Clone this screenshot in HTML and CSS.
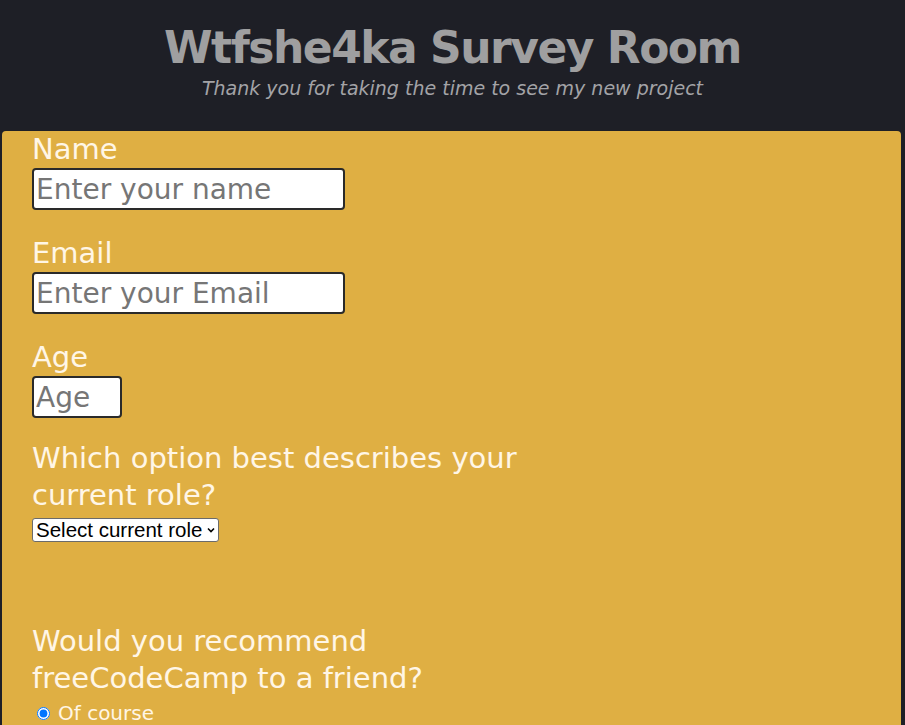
FILE: index.html
```html
<!DOCTYPE html>
<html lang="en">
<head>
<meta charset="utf-8">
<title>Wtfshe4ka Survey Room</title>
<link rel="stylesheet" href="styles.css">
</head>
<body>
<header class="header">
  <h1 class="title">Wtfshe4ka Survey Room</h1>
  <p class="subtitle">Thank you for taking the time to see my new project</p>
</header>
<form class="card">
  <div class="group">
    <label class="label" for="name">Name</label>
    <input class="field field-wide" id="name" type="text" placeholder="Enter your name">
  </div>
  <div class="group">
    <label class="label" for="email">Email</label>
    <input class="field field-wide" id="email" type="email" placeholder="Enter your Email">
  </div>
  <div class="group">
    <label class="label" for="age">Age</label>
    <input class="field field-age" id="age" type="number" placeholder="Age">
  </div>
  <div class="group group-select">
    <label class="label label-wrap" for="role">Which option best describes your current role?</label>
    <span class="select-box">
      <select class="select" id="role">
        <option>Select current role</option>
      </select>
      <svg class="chevron" width="8" height="6" viewBox="0 0 8 6" aria-hidden="true"><path d="M1 1.5 L4 4.5 L7 1.5" fill="none" stroke="#000" stroke-width="1.6"/></svg>
    </span>
  </div>
  <div class="group">
    <p class="label label-wrap">Would you recommend freeCodeCamp to a friend?</p>
    <label class="radio-row"><input class="radio" type="radio" name="rec" checked> Of course</label>
  </div>
</form>
</body>
</html>
```
FILE: styles.css
```css
html, body {
  margin: 0;
  padding: 0;
}
body {
  background: #1e1f26;
  font-family: "DejaVu Sans", "Liberation Sans", sans-serif;
  color: #fff6e6;
}
.header {
  text-align: center;
  padding-top: 19px;
  height: 114px;
  box-sizing: border-box;
}
.title {
  margin: 0;
  font-size: 44px;
  line-height: 58px;
  font-weight: bold;
  color: #9f9fa0;
  letter-spacing: -1.5px;
}
.subtitle {
  margin: -1px 0 0;
  font-size: 19px;
  line-height: 24px;
  font-style: italic;
  color: #a3a3a6;
}
.card {
  margin: 17px 4px 0 2px;
  background: #dfaf43;
  border-radius: 4px;
  padding: 0 30px 40px;
  display: flex;
  flex-direction: column;
  gap: 25px;
  min-height: 600px;
}
.group {
  display: flex;
  flex-direction: column;
  align-items: flex-start;
}
.label {
  font-size: 29px;
  line-height: 37px;
  margin: 0;
  color: #fff6e6;
}
.label-wrap {
  max-width: 520px;
}
.field {
  box-sizing: border-box;
  height: 42px;
  border: 2px solid #2a2a2a;
  border-radius: 4px;
  background: #fff;
  font-family: inherit;
  font-size: 28px;
  padding: 0 2px;
  color: #333;
}
.field::placeholder {
  color: #767676;
}
.field-wide {
  width: 313px;
}
.field-age {
  width: 90px;
}
.group-select {
  margin-top: -3px;
  margin-bottom: 56px;
}
.select-box {
  margin-top: 4px;
  display: inline-flex;
  align-items: center;
  gap: 4px;
  height: 24px;
  box-sizing: border-box;
  padding: 0 3px 0 3px;
  border: 1px solid #6b6b6b;
  border-radius: 3px;
  background: #fff;
}
.select {
  -webkit-appearance: none;
  appearance: none;
  border: 0;
  padding: 0;
  margin: 0;
  background: transparent;
  font-family: "Liberation Sans", Arial, sans-serif;
  font-size: 20.5px;
  line-height: 22px;
  height: 22px;
  color: #000;
  outline: none;
}
.chevron {
  display: block;
}
.radio-row {
  display: flex;
  align-items: center;
  gap: 8px;
  font-size: 20px;
  line-height: 24px;
  margin-top: 4px;
  padding-left: 5px;
}
.radio {
  margin: 0;
  width: 13px;
  height: 13px;
}
```
